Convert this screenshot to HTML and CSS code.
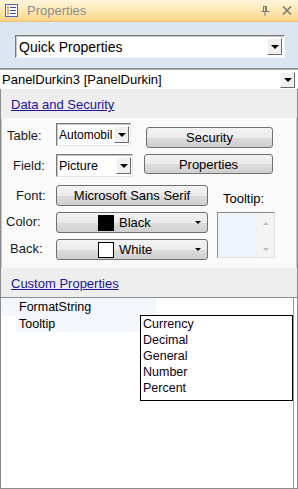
FILE: index.html
```html
<!DOCTYPE html>
<html lang="en">
<head>
    <meta charset="UTF-8">
    <title>Properties</title>
    <link rel="stylesheet" href="styles.css">
</head>
<body>
    <div class="window">
        <!-- Title bar -->
        <header class="titlebar">
            <svg class="title-icon" width="13" height="13" viewBox="0 0 13 13">
                <rect x="0.5" y="0.5" width="12" height="12" fill="#fff" stroke="#4a68b8"/>
                <rect x="2" y="2.5" width="2" height="2" fill="#e08a2a"/>
                <rect x="2" y="5.5" width="2" height="2" fill="#e08a2a"/>
                <rect x="2" y="8.5" width="2" height="2" fill="#e08a2a"/>
                <rect x="5" y="3" width="6" height="1" fill="#3550a8"/>
                <rect x="5" y="6" width="6" height="1" fill="#3550a8"/>
                <rect x="5" y="9" width="6" height="1" fill="#3550a8"/>
            </svg>
            <span class="title-text">Properties</span>
            <svg class="pin" width="9" height="10" viewBox="0 0 9 10">
                <path d="M2 0.5h4M2.5 0.5v5M5.5 0.5v5M4.5 1v4.5M0.5 5.5h8M4 6v4" stroke="#7a7a7a" fill="none"/>
            </svg>
            <svg class="close" width="10" height="9" viewBox="0 0 10 9">
                <path d="M1 0.5l8 8M9 0.5l-8 8" stroke="#7a7a7a" stroke-width="1.6" fill="none"/>
            </svg>
        </header>

        <div class="quick-area">
            <div class="combo combo-quick">
                <span class="combo-text">Quick Properties</span>
                <span class="combo-btn"><i class="arrow"></i></span>
            </div>
        </div>

        <div class="combo combo-object">
            <span class="combo-text">PanelDurkin3 [PanelDurkin]</span>
            <span class="combo-btn"><i class="arrow"></i></span>
        </div>

        <div class="panel">
            <div class="section-head"><a href="#">Data and Security</a></div>

            <div class="section-body">
                <div class="col-labels">
                    <span class="lbl lbl-table">Table:</span>
                    <span class="lbl lbl-field">Field:</span>
                    <span class="lbl lbl-font">Font:</span>
                    <span class="lbl lbl-color">Color:</span>
                    <span class="lbl lbl-back">Back:</span>
                </div>
                <div class="col-controls">
                    <div class="row-top">
                        <div class="select select-table">
                            <span>Automobil</span>
                            <span class="select-btn"><i class="arrow"></i></span>
                        </div>
                        <button class="btn btn-security">Security</button>
                    </div>
                    <div class="row-top row-field">
                        <div class="select select-field">
                            <span>Picture</span>
                            <span class="select-btn"><i class="arrow"></i></span>
                        </div>
                        <button class="btn btn-props">Properties</button>
                    </div>
                    <div class="row-lower">
                        <div class="stack">
                            <button class="btn btn-wide">Microsoft Sans Serif</button>
                            <button class="btn btn-wide btn-swatch">
                                <span class="swatch swatch-black"></span>Black
                                <i class="arrow small"></i>
                            </button>
                            <button class="btn btn-wide btn-swatch">
                                <span class="swatch swatch-white"></span>White
                                <i class="arrow small"></i>
                            </button>
                        </div>
                        <div class="tooltip-box">
                            <span class="tooltip-lbl">Tooltip:</span>
                            <div class="textarea">
                                <div class="ta-field"></div>
                                <div class="ta-scroll">
                                    <i class="sarrow up"></i>
                                    <i class="sarrow down"></i>
                                </div>
                            </div>
                        </div>
                    </div>
                </div>
            </div>

            <div class="section-head"><a href="#">Custom Properties</a></div>

            <div class="grid">
                <div class="grid-row first">FormatString</div>
                <div class="grid-row">Tooltip</div>
                <ul class="droplist">
                    <li>Currency</li>
                    <li>Decimal</li>
                    <li>General</li>
                    <li>Number</li>
                    <li>Percent</li>
                </ul>
            </div>
        </div>
    </div>
</body>
</html>
```

FILE: styles.css
```css
body, html {
    margin: 0;
    padding: 0;
    background: #fff;
    font-family: "Liberation Sans", Arial, sans-serif;
}

.window {
    width: 298px;
    height: 489px;
    display: flex;
    flex-direction: column;
    background: #dce6f1;
    overflow: hidden;
}

/* Title bar */
.titlebar {
    height: 22px;
    flex: none;
    display: flex;
    align-items: center;
    background: linear-gradient(to bottom, #fef5dc 0%, #fde8b4 50%, #fbd383 100%);
    border-bottom: 1px solid #e9c27a;
    box-sizing: border-box;
}

.title-icon {
    margin-left: 5px;
}

.title-text {
    margin-left: 9px;
    font-size: 13px;
    color: #8e8e8e;
    flex: 1;
}

.pin {
    margin-right: 12px;
}

.close {
    margin-right: 6px;
}

/* Combos */
.quick-area {
    height: 47px;
    flex: none;
    padding: 13px 13px 0 15px;
    box-sizing: border-box;
    border-bottom: 1px solid #8a8a8a;
}

.combo {
    display: flex;
    align-items: center;
    background: #fff;
    box-sizing: border-box;
}

.combo-quick {
    height: 23px;
    border: 1px solid;
    border-color: #7a7a7a #f4f4f4 #f4f4f4 #7a7a7a;
    box-shadow: inset 1px 1px 0 #c4c4c4;
    font-size: 14px;
    padding-left: 3px;
}

.combo-object {
    height: 20px;
    flex: none;
    border-top: 1px solid #b0b0b0;
    font-size: 13px;
    padding-left: 2px;
}

.combo-text {
    flex: 1;
    color: #000;
}

.combo-btn,
.select-btn {
    width: 15px;
    height: 17px;
    margin-right: 2px;
    background: #f0f0f0;
    border: 1px solid;
    border-color: #fff #6a6a6a #6a6a6a #fff;
    box-sizing: border-box;
    display: flex;
    align-items: center;
    justify-content: center;
    flex: none;
}

.select-btn {
    margin-right: 1px;
}

.combo-object .combo-btn {
    height: 16px;
    margin-right: 3px;
}

.arrow {
    width: 0;
    height: 0;
    border-left: 4px solid transparent;
    border-right: 4px solid transparent;
    border-top: 4px solid #000;
}

.arrow.small {
    border-left-width: 3px;
    border-right-width: 3px;
    border-top-width: 3px;
}

/* Panel */
.panel {
    flex: 1;
    display: flex;
    flex-direction: column;
    background: #fafafa;
    border: 1px solid #8c8c8c;
    border-top: none;
    box-shadow: inset 1px 0 0 #c8c8c8, inset -1px 0 0 #c8c8c8, inset 0 -1px 0 #c8c8c8;
}

.section-head {
    height: 29px;
    flex: none;
    background: #eeeeee;
    padding: 8px 0 0 10px;
    box-sizing: border-box;
    font-size: 13px;
}

.section-head a {
    color: #22139a;
}

.section-body {
    height: 150px;
    flex: none;
    display: flex;
    font-size: 13px;
}

.col-labels {
    width: 55px;
    display: flex;
    flex-direction: column;
    color: #1a1a1a;
}

.lbl {
    display: block;
    height: 14px;
}

.lbl-table { margin: 10px 0 0 6px; }
.lbl-field { margin: 16px 0 0 12px; }
.lbl-font { margin: 16px 0 0 15px; }
.lbl-color { margin: 12px 0 0 5px; }
.lbl-back { margin: 13px 0 0 9px; }

.col-controls {
    flex: 1;
    display: flex;
    flex-direction: column;
}

.row-top {
    display: flex;
    align-items: flex-start;
    margin-top: 5px;
}

.row-field {
    margin-top: 6px;
}

.select {
    height: 23px;
    display: flex;
    align-items: center;
    background: #fff;
    border: 1px solid;
    border-color: #7a7a7a #e6e6e6 #e6e6e6 #7a7a7a;
    box-sizing: border-box;
    box-shadow: inset 1px 1px 0 #c4c4c4;
    padding-left: 2px;
    font-size: 12px;
}

.select span:first-child {
    flex: 1;
    overflow: hidden;
    white-space: nowrap;
}

.select-table { width: 75px; }
.select-field { width: 77px; font-size: 12.5px; }

.btn {
    font-family: "Liberation Sans", Arial, sans-serif;
    font-size: 13px;
    color: #000;
    height: 21px;
    padding: 0;
    border: 1px solid #707070;
    border-radius: 3px;
    background: linear-gradient(to bottom, #f2f2f2 0%, #ebebeb 50%, #dddddd 51%, #cfcfcf 100%);
    box-sizing: border-box;
}

.btn-security {
    width: 127px;
    margin: 4px 0 0 15px;
}

.btn-props {
    width: 129px;
    margin: 0 0 0 11px;
    height: 20px;
}

.row-lower {
    display: flex;
    margin-top: 8px;
}

.stack {
    display: flex;
    flex-direction: column;
    gap: 6px;
}

.btn-wide {
    width: 152px;
}

.btn-swatch {
    display: flex;
    align-items: center;
    padding-left: 41px;
    position: relative;
}

.swatch {
    width: 16px;
    height: 16px;
    margin-right: 5px;
    box-sizing: border-box;
    border: 1px solid #000;
}

.swatch-black { background: #000; }
.swatch-white { background: #fff; }

.btn-swatch .arrow {
    position: absolute;
    right: 6px;
    top: 8px;
}

.tooltip-box {
    margin-left: 9px;
    display: flex;
    flex-direction: column;
}

.tooltip-lbl {
    margin: 6px 0 0 6px;
    font-size: 13px;
}

.textarea {
    margin-top: 6px;
    width: 58px;
    height: 46px;
    display: flex;
    border: 1px solid;
    border-color: #8a8a8a #e0e0e0 #e0e0e0 #8a8a8a;
    box-sizing: border-box;
}

.ta-field {
    flex: 1;
    background: #eef4fc;
}

.ta-scroll {
    width: 17px;
    background: #f4f4f4;
    display: flex;
    flex-direction: column;
    justify-content: space-between;
    align-items: center;
    padding: 9px 0 6px;
    box-sizing: border-box;
}

.sarrow {
    width: 0;
    height: 0;
    border-left: 3px solid transparent;
    border-right: 3px solid transparent;
}

.sarrow.up { border-bottom: 3px solid #bdbdbd; }
.sarrow.down { border-top: 3px solid #bdbdbd; }

/* Property grid */
.grid {
    flex: 1;
    background: #fff;
    border-top: 1px solid #8c8c8c;
    position: relative;
    font-size: 12.5px;
    box-shadow: inset -3px 0 0 #fff, inset -4px 0 0 #9a9a9a;
}

.grid-row {
    width: 123px;
    height: 16px;
    margin-left: 15px;
    padding-left: 3px;
    background: #f3f6fa;
    line-height: 16px;
    color: #000;
}

.grid-row.first {
    width: 137px;
    margin-left: 1px;
    padding-left: 17px;
    height: 18px;
    line-height: 19px;
}

.droplist {
    position: absolute;
    left: 139px;
    top: 17px;
    width: 153px;
    height: 86px;
    margin: 0;
    padding: 0 0 0 2px;
    box-sizing: border-box;
    list-style: none;
    border: 1px solid #000;
    background: #fff;
    font-size: 12.5px;
}

.droplist li {
    height: 16px;
    line-height: 16px;
    color: #100020;
}
```
